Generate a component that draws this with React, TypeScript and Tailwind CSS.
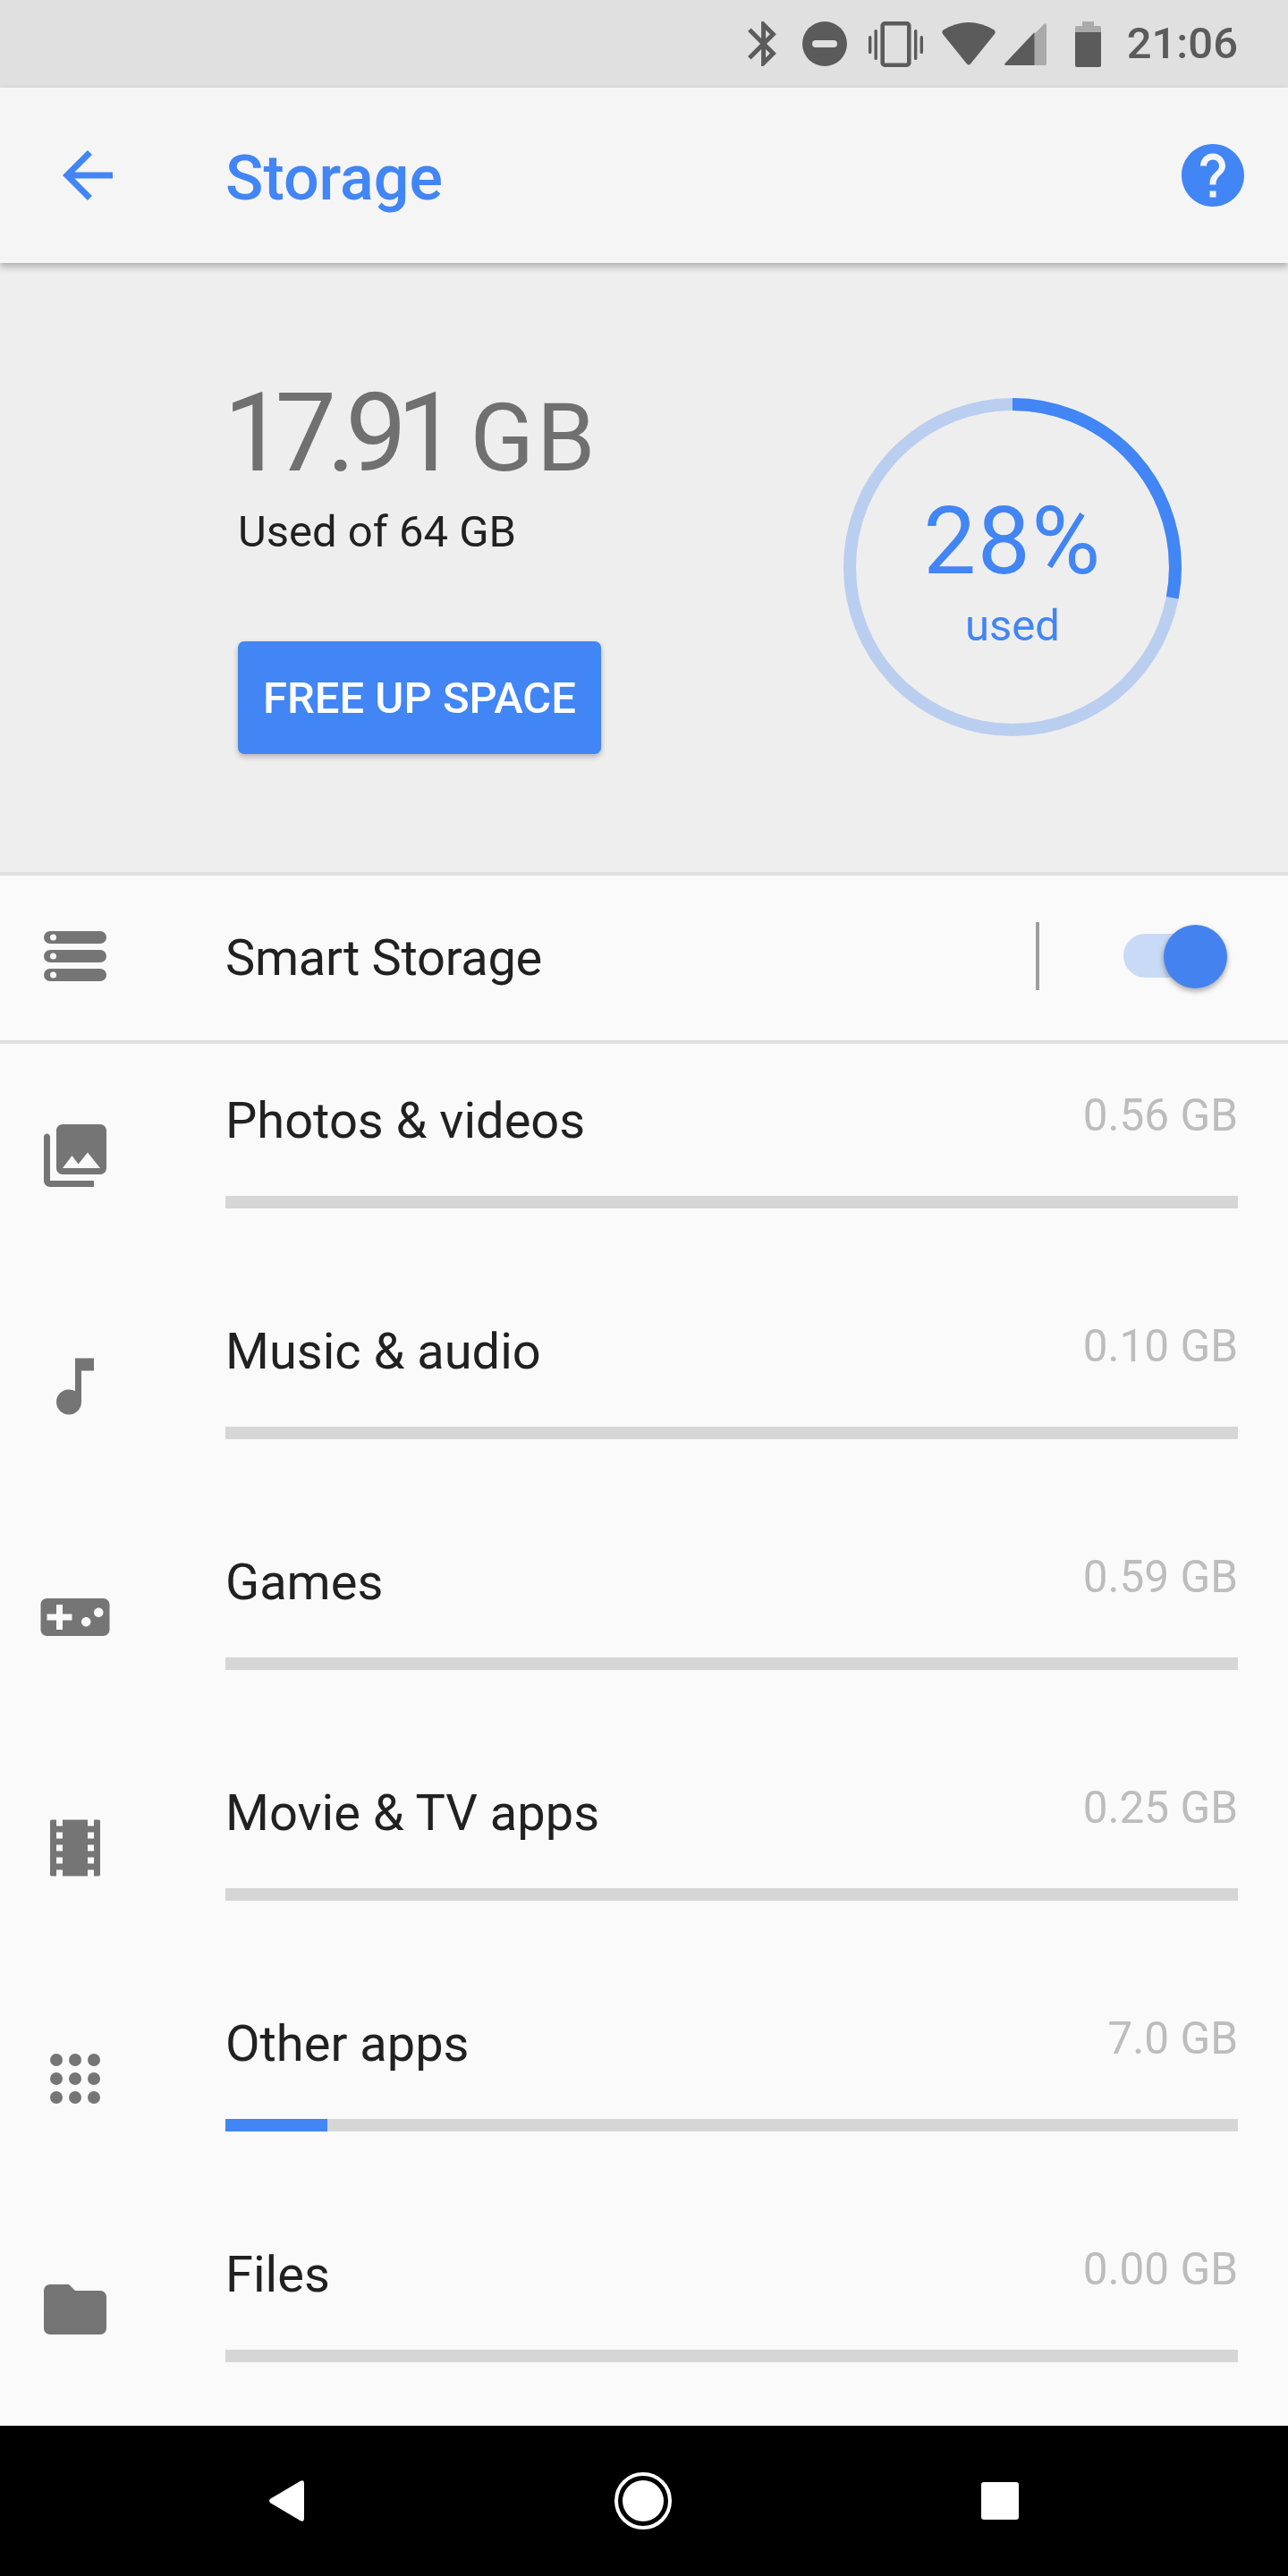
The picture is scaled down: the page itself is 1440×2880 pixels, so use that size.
import React from 'react';

const iconPaths: Record<string, string> = {
  photos:
    'M22 16V4c0-1.1-.9-2-2-2H8c-1.1 0-2 .9-2 2v12c0 1.1.9 2 2 2h12c1.1 0 2-.9 2-2zm-11-4l2.03 2.71L16 11l4 5H8l3-4zM2 6v14c0 1.1.9 2 2 2h14v-2H4V6c0-.55-.45-1-1-1s-1 .45-1 1z',
  music: 'M12 3v10.55c-.59-.34-1.27-.55-2-.55-2.21 0-4 1.79-4 4s1.79 4 4 4 4-1.79 4-4V7h4V3h-6z',
  games:
    'M21 6H3c-1.1 0-2 .9-2 2v8c0 1.1.9 2 2 2h18c1.1 0 2-.9 2-2V8c0-1.1-.9-2-2-2zm-10 7H8v3H6v-3H3v-2h3V8h2v3h3v2zm4.5 2c-.83 0-1.5-.67-1.5-1.5s.67-1.5 1.5-1.5 1.5.67 1.5 1.5-.67 1.5-1.5 1.5zm4-3c-.83 0-1.5-.67-1.5-1.5S18.67 9 19.5 9s1.5.67 1.5 1.5-.67 1.5-1.5 1.5z',
  movie:
    'M18 3v2h-2V3H8v2H6V3H4.5C4.2 3 4 3.2 4 3.5v17c0 .3.2.5.5.5H6v-2h2v2h8v-2h2v2h1.5c.3 0 .5-.2.5-.5v-17c0-.3-.2-.5-.5-.5H18zM8 17H6v-2h2v2zm0-4H6v-2h2v2zm0-4H6V7h2v2zm10 8h-2v-2h2v2zm0-4h-2v-2h2v2zm0-4h-2V7h2v2z',
  folder: 'M10 4H4c-1.1 0-1.99.9-1.99 2L2 18c0 1.1.9 2 2 2h16c1.1 0 2-.9 2-2V8c0-1.1-.9-2-2-2h-8l-2-2z',
};

function GlyphIcon({ name }: { name: string }) {
  if (name === 'apps') {
    return (
      <svg viewBox="0 0 24 24" className="w-[84px] h-[84px]" fill="#757575">
        {[6, 12, 18].map((cy) =>
          [6, 12, 18].map((cx) => <circle key={`${cx}-${cy}`} cx={cx} cy={cy} r="2" />),
        )}
      </svg>
    );
  }
  return (
    <svg viewBox="0 0 24 24" className="w-[84px] h-[84px]" fill="#757575">
      <path d={iconPaths[name]} />
    </svg>
  );
}

function StatusBar() {
  return (
    <div className="h-[98px] shrink-0 bg-[#e0e0e0] flex items-center justify-end pr-[56px]">
      {/* Bluetooth */}
      <svg viewBox="5 2 12.71 20" className="w-[32px] h-[50px]" fill="#5b5b5b">
        <path d="M17.71 7.71L12 2h-1v7.59L6.41 5 5 6.41 10.59 12 5 17.59 6.41 19 11 14.41V22h1l5.71-5.71-4.3-4.29 4.3-4.29zM13 5.83l1.88 1.88L13 9.59V5.83zm1.88 10.46L13 18.17v-3.76l1.88 1.88z" />
      </svg>
      {/* Do not disturb */}
      <svg viewBox="0 0 50 50" className="ml-[29px] w-[50px] h-[50px]">
        <circle cx="25" cy="25" r="25" fill="#5b5b5b" />
        <rect x="11" y="21" width="28" height="8" rx="4" fill="#e0e0e0" />
      </svg>
      {/* Vibrate */}
      <svg viewBox="0 0 61 51" className="ml-[24px] w-[61px] h-[51px]" fill="#5b5b5b">
        <rect x="0" y="16" width="3.4" height="20" rx="1.5" />
        <rect x="6.5" y="9" width="3.4" height="34" rx="1.5" />
        <rect x="51" y="9" width="3.4" height="34" rx="1.5" />
        <rect x="57.6" y="16" width="3.4" height="20" rx="1.5" />
        <rect x="15.7" y="2.3" width="29.6" height="46.4" rx="2.5" fill="none" stroke="#5b5b5b" strokeWidth="4.6" />
      </svg>
      {/* Wifi */}
      <svg viewBox="0 0 60 48" className="ml-[21px] w-[60px] h-[48px]" fill="#5b5b5b">
        <path d="M1.5 8.5Q30 -8.5 58.5 8.5Q60.5 10.5 59 13L32 46.5Q30 48.5 28 46.5L1 13Q-0.5 10.5 1.5 8.5Z" />
      </svg>
      {/* Signal */}
      <svg viewBox="0 0 47 47" className="ml-[10px] w-[47px] h-[47px]">
        <path d="M1 44.5L44 1.2Q47 -1 47 2V45Q47 47 45 47H2Q-1 47 1 44.5Z" fill="#aaaaaa" />
        <path d="M1 44.5L33.5 10V47H2Q-1 47 1 44.5Z" fill="#5b5b5b" />
      </svg>
      {/* Battery */}
      <svg viewBox="0 0 29 51" className="ml-[32px] w-[29px] h-[51px]">
        <rect x="8" y="0" width="13" height="7" fill="#aaaaaa" />
        <path d="M0 7Q0 5 2 5H27Q29 5 29 7V12H0Z" fill="#aaaaaa" />
        <path d="M0 12H29V49Q29 51 27 51H2Q0 51 0 49Z" fill="#5b5b5b" />
      </svg>
      <span className="ml-[29px] text-[49px] leading-[68px] font-medium text-[#5b5b5b]">21:06</span>
    </div>
  );
}

function TopBar() {
  return (
    <div className="relative z-10 h-[196px] shrink-0 bg-[#f5f5f5] flex items-center pl-[56px] pr-[42px] shadow-[0_4px_8px_rgba(0,0,0,0.28)]">
      <svg viewBox="0 0 24 24" className="w-[84px] h-[84px]" fill="#4285f4">
        <path d="M20 11H7.83l5.59-5.59L12 4l-8 8 8 8 1.41-1.41L7.83 13H20v-2z" />
      </svg>
      <h1 className="ml-[112px] mt-[6px] text-[70px] leading-[82px] font-medium text-[#4285f4]">Storage</h1>
      <svg viewBox="0 0 24 24" className="ml-auto w-[84px] h-[84px]" fill="#4285f4">
        <path d="M12 2C6.48 2 2 6.48 2 12s4.48 10 10 10 10-4.48 10-10S17.52 2 12 2zm1 17h-2v-2h2v2zm2.07-7.75l-.9.92C13.45 12.9 13 13.5 13 15h-2v-.5c0-1.1.45-2.1 1.17-2.83l1.24-1.26c.37-.36.59-.86.59-1.41 0-1.1-.9-2-2-2s-2 .9-2 2H8c0-2.21 1.79-4 4-4s4 1.79 4 4c0 .88-.36 1.68-.93 2.25z" />
      </svg>
    </div>
  );
}

function UsageRing() {
  const r = 182;
  const c = 2 * Math.PI * r;
  return (
    <div className="relative mt-[151px] mr-[119px] w-[378px] h-[378px] flex flex-col items-center">
      <svg viewBox="0 0 378 378" className="absolute inset-0 w-[378px] h-[378px] -rotate-90" fill="none">
        <circle cx="189" cy="189" r={r} stroke="#bacef0" strokeWidth="14" />
        <circle cx="189" cy="189" r={r} stroke="#4285f4" strokeWidth="14" strokeDasharray={`${c * 0.28} ${c}`} />
      </svg>
      <span className="mt-[101px] text-[105px] leading-[120px] tracking-[1.5px] text-[#4285f4]">28%</span>
      <span className="mt-[4px] text-[49px] leading-[60px] text-[#4285f4]">used</span>
    </div>
  );
}

function Hero() {
  return (
    <section className="h-[681px] shrink-0 bg-[#eeeeee] flex justify-between pl-[266px]">
      <div className="pt-[130px] flex flex-col items-start">
        <div className="-ml-[16px] flex items-baseline text-[#707070] whitespace-nowrap">
          <span className="text-[122px] leading-[122px] tracking-[-11px]">17.91</span>
          <span className="ml-[24px] text-[105px] leading-[122px] tracking-[3px]">GB</span>
        </div>
        <p className="mt-[9px] text-[49px] leading-[68px] text-[#212121]">Used of 64 GB</p>
        <button className="mt-[88px] w-[406px] h-[126px] pt-[2px] rounded-[7px] bg-[#4285f4] text-white text-[49px] font-medium shadow-[0_3px_6px_rgba(0,0,0,0.25)]">
          FREE UP SPACE
        </button>
      </div>
      <UsageRing />
    </section>
  );
}

function SmartStorageRow() {
  return (
    <div className="h-[192px] shrink-0 bg-[#fafafa] border-y-4 border-[#e0e0e0] flex items-start pl-[42px] pr-[68px]">
      <svg viewBox="0 0 24 24" className="mt-[48px] w-[84px] h-[84px]" fill="#757575" fillRule="evenodd">
        <path d="M4 4h16a2 2 0 0 1 0 4H4a2 2 0 0 1 0-4zm1 1a1 1 0 1 0 0 2 1 1 0 0 0 0-2z" />
        <path d="M4 10h16a2 2 0 0 1 0 4H4a2 2 0 0 1 0-4zm1 1a1 1 0 1 0 0 2 1 1 0 0 0 0-2z" />
        <path d="M4 16h16a2 2 0 0 1 0 4H4a2 2 0 0 1 0-4zm1 1a1 1 0 1 0 0 2 1 1 0 0 0 0-2z" />
      </svg>
      <span className="ml-[126px] mt-[54px] text-[56px] leading-[76px] tracking-[-0.3px] text-[#212121]">Smart Storage</span>
      <div className="ml-auto mt-[52px] w-[4px] h-[76px] bg-[#9e9e9e]" />
      <div className="relative ml-[94px] mt-[55px] w-[116px] h-[71px]">
        <div className="absolute left-0 top-[10px] w-[94px] h-[49px] rounded-full bg-[#c8daf6]" />
        <div className="absolute right-0 top-0 w-[71px] h-[71px] rounded-full bg-[#4483ef] shadow-[0_3px_6px_rgba(0,0,0,0.35)]" />
      </div>
    </div>
  );
}

const rows = [
  { icon: 'photos', label: 'Photos & videos', size: '0.56 GB', fill: 0 },
  { icon: 'music', label: 'Music & audio', size: '0.10 GB', fill: 0 },
  { icon: 'games', label: 'Games', size: '0.59 GB', fill: 0 },
  { icon: 'movie', label: 'Movie & TV apps', size: '0.25 GB', fill: 0 },
  { icon: 'apps', label: 'Other apps', size: '7.0 GB', fill: 114 },
  { icon: 'folder', label: 'Files', size: '0.00 GB', fill: 0 },
];

function StorageRow({ icon, label, size, fill }: (typeof rows)[number]) {
  return (
    <div className="h-[258px] shrink-0 flex">
      <div className="w-[252px] shrink-0 pl-[42px] pt-[83px]">
        <GlyphIcon name={icon} />
      </div>
      <div className="flex-1 pr-[56px] pt-[46px]">
        <div className="flex items-start justify-between">
          <span className="mt-[2px] text-[56px] leading-[76px] text-[#212121]">{label}</span>
          <span className="mt-[1px] text-[49.5px] leading-[67px] text-[#bdbdbd]">{size}</span>
        </div>
        <div className="mt-[46px] h-[14px] bg-[#d6d6d6]">
          {fill > 0 && <div className="h-full bg-[#4285f4]" style={{ width: fill }} />}
        </div>
      </div>
    </div>
  );
}

function NavBar() {
  return (
    <div className="h-[168px] shrink-0 bg-black flex items-center justify-between px-[301px]">
      <svg viewBox="0 0 39 46" className="w-[39px] h-[46px]" fill="white">
        <path d="M1.2 20.8L35 .8Q39 -1 39 3V43Q39 47 35 45.2L1.2 25.2Q-1 23 1.2 20.8Z" />
      </svg>
      <div className="w-[64px] h-[64px] rounded-full border-4 border-white p-[5px]">
        <div className="w-full h-full rounded-full bg-white" />
      </div>
      <div className="w-[42px] h-[42px] rounded-[3px] bg-white" />
    </div>
  );
}

export default function App() {
  return (
    <div className="w-[1440px] h-[2880px] flex flex-col overflow-hidden bg-[#fafafa] font-['Roboto',sans-serif]">
      <StatusBar />
      <TopBar />
      <Hero />
      <SmartStorageRow />
      <div className="flex-1 min-h-0 overflow-hidden">
        {rows.map((row) => (
          <StorageRow key={row.label} {...row} />
        ))}
      </div>
      <NavBar />
    </div>
  );
}
